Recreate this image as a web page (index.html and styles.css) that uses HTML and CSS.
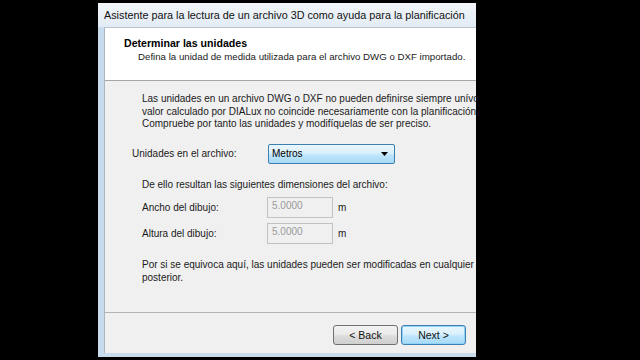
FILE: index.html
```html
<!DOCTYPE html>
<html lang="es">
<head>
<meta charset="utf-8">
<title>Asistente</title>
<link rel="stylesheet" href="styles.css">
</head>
<body>
<div class="window">
  <div class="titlebar">Asistente para la lectura de un archivo 3D como ayuda para la planificación</div>
  <div class="client">
    <div class="header">
      <div class="h-title">Determinar las unidades</div>
      <div class="h-sub">Defina la unidad de medida utilizada para el archivo DWG o DXF importado.</div>
    </div>
    <div class="body">
      <p class="para">Las unidades en un archivo DWG o DXF no pueden definirse siempre unívocamente. Puede que el<br>valor calculado por DIALux no coincide necesariamente con la planificación original.<br>Compruebe por tanto las unidades y modifíquelas de ser preciso.</p>
      <div class="row units">
        <span class="lbl-units">Unidades en el archivo:</span>
        <div class="select"><span>Metros</span><svg class="arrow" width="7" height="4" viewBox="0 0 7 4"><path d="M0 0H7L3.5 4Z" fill="#000"/></svg></div>
      </div>
      <p class="para result">De ello resultan las siguientes dimensiones del archivo:</p>
      <div class="row dim first">
        <span class="lbl-dim">Ancho del dibujo:</span>
        <div class="input">5.0000</div>
        <span class="unit">m</span>
      </div>
      <div class="row dim">
        <span class="lbl-dim">Altura del dibujo:</span>
        <div class="input">5.0000</div>
        <span class="unit">m</span>
      </div>
      <p class="para note">Por si se equivoca aquí, las unidades pueden ser modificadas en cualquier momento<br>posterior.</p>
    </div>
    <div class="footer">
      <button class="btn back">&lt; Back</button>
      <button class="btn next">Next &gt;</button>
    </div>
  </div>
</div>
</body>
</html>
```
FILE: styles.css
```css
html, body {
  margin: 0;
  padding: 0;
  background: #000;
  width: 640px;
  height: 360px;
  overflow: hidden;
}
body {
  font-family: "Liberation Sans", Arial, sans-serif;
  font-size: 10px;
  color: #1a1a1a;
}
.window {
  margin: 3px 0 0 98px;
  width: 378px;
  height: 354px;
  background: #c9dcee;
  display: flex;
  flex-direction: column;
  overflow: hidden;
}
.titlebar {
  height: 24px;
  line-height: 25px;
  padding-left: 6px;
  font-size: 10.8px;
  color: #111;
  background: linear-gradient(#f3f6fa, #e2ebf5);
  white-space: nowrap;
}
.client {
  margin-left: 6px;
  width: 420px;
  height: 325px;
  border-left: 1px solid #a9b6c4;
  border-top: 1px solid #b8c4d0;
  background: #f0f0f0;
  display: flex;
  flex-direction: column;
}
.header {
  height: 53px;
  background: #fff;
  border-bottom: 1px solid #a6a6a6;
  padding-left: 19px;
  box-sizing: border-box;
  padding-top: 9px;
}
.h-title {
  font-weight: bold;
  font-size: 10.6px;
  line-height: 13px;
  color: #000;
}
.h-sub {
  padding-left: 14px;
  line-height: 13px;
  font-size: 9.7px;
  white-space: nowrap;
}
.body {
  flex: 1;
  padding: 12px 0 0 37px;
  box-sizing: border-box;
}
.para {
  margin: 0;
  line-height: 12.5px;
  white-space: nowrap;
}
.row {
  display: flex;
  align-items: center;
}
.units {
  margin: 13px 0 0 -10px;
}
.lbl-units {
  width: 136px;
}
.select {
  width: 116px;
  height: 18px;
  border: 1px solid #3c7fb1;
  border-radius: 2px;
  background: linear-gradient(#eaf6fd 0%, #d9f0fc 45%, #bee6fd 55%, #a7d9f5 100%);
  display: flex;
  align-items: center;
  justify-content: space-between;
  padding: 0 6px 0 3px;
  box-sizing: content-box;
  color: #000;
}
.arrow {
  display: block;
}
.result {
  margin-top: 15px;
}
.dim.first {
  margin-top: 6px;
}
.dim {
  margin-top: 5px;
}
.lbl-dim {
  width: 125px;
}
.input {
  width: 60px;
  height: 19px;
  border: 1px solid #c2c2c2;
  background: #f0f0f0;
  color: #9a9a9a;
  padding-left: 4px;
  line-height: 16px;
}
.unit {
  margin-left: 5px;
}
.note {
  margin-top: 15px;
}
.footer {
  height: 40px;
  border-top: 1px solid #b3b3b3;
  display: flex;
  align-items: center;
  padding-left: 228px;
  gap: 3px;
}
.btn {
  width: 65px;
  height: 20px;
  font-family: inherit;
  font-size: 10.5px;
  color: #111;
  border-radius: 3px;
  padding: 0;
  margin-top: 4px;
}
.back {
  border: 1px solid #707070;
  background: linear-gradient(#f2f2f2 0%, #ebebeb 45%, #dddddd 55%, #cfcfcf 100%);
}
.next {
  border: 1px solid #3c7fb1;
  background: linear-gradient(#eaf6fd 0%, #d9f0fc 45%, #bee6fd 55%, #a7d9f5 100%);
  box-shadow: inset 0 0 0 1px #8fd3f7;
}
```
